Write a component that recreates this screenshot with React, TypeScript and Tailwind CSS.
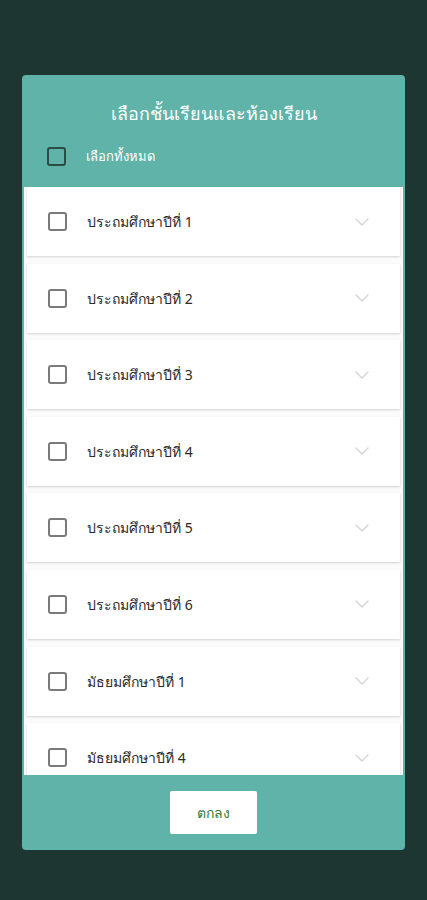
import { ChevronDown } from "lucide-react";

const grades = [
  "ประถมศึกษาปีที่ 1",
  "ประถมศึกษาปีที่ 2",
  "ประถมศึกษาปีที่ 3",
  "ประถมศึกษาปีที่ 4",
  "ประถมศึกษาปีที่ 5",
  "ประถมศึกษาปีที่ 6",
  "มัธยมศึกษาปีที่ 1",
  "มัธยมศึกษาปีที่ 4",
];

function GradeRow({ label }: { label: string }) {
  return (
    <div className="flex h-[69px] shrink-0 items-center bg-white pl-[21px] pr-[26px] shadow-[0_1px_2px_rgba(0,0,0,0.16)]">
      <span className="h-[19px] w-[19px] rounded-[3px] border-2 border-[#7a7a7a]" />
      <span className="ml-[20px] flex-1 text-[14px] text-[#2a2a2a]">{label}</span>
      <ChevronDown className="h-[24px] w-[24px] text-[#d2d2d2]" strokeWidth={1.3} />
    </div>
  );
}

export default function App() {
  return (
    <div
      className="min-h-[900px] bg-[#1e3631] px-[22px] pt-[75px]"
      style={{ fontFamily: '"Noto Sans", "Liberation Sans", sans-serif' }}
    >
      <div className="flex h-[775px] w-[383px] flex-col overflow-hidden rounded-[4px] bg-[#5fb3a8]">
        <div className="h-[112px] shrink-0">
          <h1 className="pt-[24px] text-center text-[18px] leading-[28px] text-white">
            เลือกชั้นเรียนและห้องเรียน
          </h1>
          <div className="mt-[20px] flex items-center pl-[25px]">
            <span className="h-[19px] w-[19px] rounded-[3px] border-2 border-[#2c4c46]" />
            <span className="ml-[20px] text-[13px] text-white">เลือกทั้งหมด</span>
          </div>
        </div>
        <div className="mx-[2px] flex flex-1 flex-col gap-[7.6px] overflow-hidden bg-[#fbfbfb] px-[3px]">
          {grades.map((g) => (
            <GradeRow key={g} label={g} />
          ))}
        </div>
        <div className="flex h-[75px] shrink-0 items-center justify-center">
          <button className="h-[43px] w-[87px] rounded-[2px] bg-white text-[14px] text-[#2e7d32]">
            ตกลง
          </button>
        </div>
      </div>
    </div>
  );
}
